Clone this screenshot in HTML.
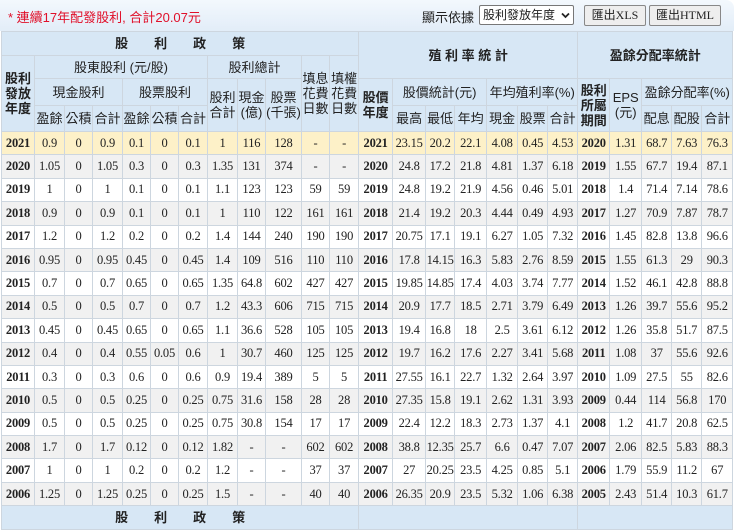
<!DOCTYPE html>
<html><head><meta charset="utf-8"><style>
body{margin:0;width:740px;height:517px;overflow:hidden;background:#fff;font-family:"Liberation Serif","Noto Sans CJK TC",serif;color:#222;}
.bar{position:absolute;left:0;top:0;width:734px;height:31px;background:linear-gradient(#f3f8fd,#e2edf8);border-radius:0 8px 0 0;}
.t{position:absolute;left:8px;top:7px;color:#e0102a;font-size:13px;font-family:"Liberation Sans","Noto Sans CJK TC",sans-serif;}
.lab{position:absolute;left:422px;top:7px;font-size:13px;font-family:"Liberation Sans","Noto Sans CJK TC",sans-serif;}
.sel{position:absolute;left:479px;top:5px;width:90px;height:18px;border:1px solid #777;border-radius:2px;background:#fff;font-size:12px;line-height:18px;padding-left:3px;font-family:"Liberation Sans","Noto Sans CJK TC",sans-serif;}
.sel svg{position:absolute;right:3px;top:6px;}
.btn{position:absolute;top:5px;height:19px;border:1px solid #888;background:#eee;font-size:12px;line-height:19px;text-align:center;border-radius:2px;}
table{position:absolute;left:1px;top:31px;border-collapse:collapse;table-layout:fixed;width:731px;font-size:13px;}
td,th{border:1px solid #cdd6df;padding:0;text-align:center;white-space:nowrap;overflow:visible;}
td{font-size:12.5px;letter-spacing:-0.2px;}
th{background:#d7e7f5;font-weight:normal;font-family:"Liberation Sans","Noto Sans CJK TC",sans-serif;line-height:15px;}
th.b{font-weight:bold;}
tr.d td{height:22.4px;}
tr.d td:first-child,tr.d td:nth-child(13),tr.d td:nth-child(20){font-weight:bold;}
tr.y td{background:#fdf1c8;}
tr.g td{background:#f1f1f1;}
</style></head><body>
<div class="bar"></div>
<div class="t">* 連續17年配發股利, 合計20.07元</div>
<div class="lab">顯示依據：</div>
<div class="sel">股利發放年度<svg width="9" height="7" viewBox="0 0 9 7"><path d="M1 1.5L4.5 5 8 1.5" fill="none" stroke="#222" stroke-width="1.8"/></svg></div>
<div class="btn" style="left:584px;width:60px">匯出XLS</div>
<div class="btn" style="left:649px;width:70px">匯出HTML</div>
<table>
<colgroup><col style="width:33px"><col style="width:30px"><col style="width:28px"><col style="width:30px"><col style="width:28px"><col style="width:28px"><col style="width:29px"><col style="width:30px"><col style="width:28px"><col style="width:36px"><col style="width:28px"><col style="width:29px"><col style="width:34px"><col style="width:33px"><col style="width:29px"><col style="width:32px"><col style="width:31px"><col style="width:30px"><col style="width:30px"><col style="width:32px"><col style="width:32px"><col style="width:30px"><col style="width:30px"><col style="width:31px"></colgroup>
<tr style="height:24px"><th colspan="12" class="b">股　　利　　政　　策</th><th colspan="7" rowspan="2" class="b">殖 利 率 統 計</th><th colspan="5" rowspan="2" class="b">盈餘分配率統計</th></tr>
<tr style="height:23px"><th rowspan="3" class="b">股利<br>發放<br>年度</th><th colspan="6">股東股利 (元/股)</th><th colspan="3">股利總計</th><th rowspan="3">填息<br>花費<br>日數</th><th rowspan="3">填權<br>花費<br>日數</th></tr>
<tr style="height:27px"><th colspan="3">現金股利</th><th colspan="3">股票股利</th><th rowspan="2">股利<br>合計</th><th rowspan="2">現金<br>(億)</th><th rowspan="2">股票<br>(千張)</th><th rowspan="2" class="b">股價<br>年度</th><th colspan="3">股價統計(元)</th><th colspan="3">年均殖利率(%)</th><th rowspan="2" class="b">股利<br>所屬<br>期間</th><th rowspan="2">EPS<br>(元)</th><th colspan="3">盈餘分配率(%)</th></tr>
<tr style="height:26px"><th>盈餘</th><th>公積</th><th>合計</th><th>盈餘</th><th>公積</th><th>合計</th><th>最高</th><th>最低</th><th>年均</th><th>現金</th><th>股票</th><th>合計</th><th>配息</th><th>配股</th><th>合計</th></tr>
<tr class="d y"><td>2021</td><td>0.9</td><td>0</td><td>0.9</td><td>0.1</td><td>0</td><td>0.1</td><td>1</td><td>116</td><td>128</td><td>-</td><td>-</td><td>2021</td><td>23.15</td><td>20.2</td><td>22.1</td><td>4.08</td><td>0.45</td><td>4.53</td><td>2020</td><td>1.31</td><td>68.7</td><td>7.63</td><td>76.3</td></tr>
<tr class="d g"><td>2020</td><td>1.05</td><td>0</td><td>1.05</td><td>0.3</td><td>0</td><td>0.3</td><td>1.35</td><td>131</td><td>374</td><td>-</td><td>-</td><td>2020</td><td>24.8</td><td>17.2</td><td>21.8</td><td>4.81</td><td>1.37</td><td>6.18</td><td>2019</td><td>1.55</td><td>67.7</td><td>19.4</td><td>87.1</td></tr>
<tr class="d"><td>2019</td><td>1</td><td>0</td><td>1</td><td>0.1</td><td>0</td><td>0.1</td><td>1.1</td><td>123</td><td>123</td><td>59</td><td>59</td><td>2019</td><td>24.8</td><td>19.2</td><td>21.9</td><td>4.56</td><td>0.46</td><td>5.01</td><td>2018</td><td>1.4</td><td>71.4</td><td>7.14</td><td>78.6</td></tr>
<tr class="d g"><td>2018</td><td>0.9</td><td>0</td><td>0.9</td><td>0.1</td><td>0</td><td>0.1</td><td>1</td><td>110</td><td>122</td><td>161</td><td>161</td><td>2018</td><td>21.4</td><td>19.2</td><td>20.3</td><td>4.44</td><td>0.49</td><td>4.93</td><td>2017</td><td>1.27</td><td>70.9</td><td>7.87</td><td>78.7</td></tr>
<tr class="d"><td>2017</td><td>1.2</td><td>0</td><td>1.2</td><td>0.2</td><td>0</td><td>0.2</td><td>1.4</td><td>144</td><td>240</td><td>190</td><td>190</td><td>2017</td><td>20.75</td><td>17.1</td><td>19.1</td><td>6.27</td><td>1.05</td><td>7.32</td><td>2016</td><td>1.45</td><td>82.8</td><td>13.8</td><td>96.6</td></tr>
<tr class="d g"><td>2016</td><td>0.95</td><td>0</td><td>0.95</td><td>0.45</td><td>0</td><td>0.45</td><td>1.4</td><td>109</td><td>516</td><td>110</td><td>110</td><td>2016</td><td>17.8</td><td>14.15</td><td>16.3</td><td>5.83</td><td>2.76</td><td>8.59</td><td>2015</td><td>1.55</td><td>61.3</td><td>29</td><td>90.3</td></tr>
<tr class="d"><td>2015</td><td>0.7</td><td>0</td><td>0.7</td><td>0.65</td><td>0</td><td>0.65</td><td>1.35</td><td>64.8</td><td>602</td><td>427</td><td>427</td><td>2015</td><td>19.85</td><td>14.85</td><td>17.4</td><td>4.03</td><td>3.74</td><td>7.77</td><td>2014</td><td>1.52</td><td>46.1</td><td>42.8</td><td>88.8</td></tr>
<tr class="d g"><td>2014</td><td>0.5</td><td>0</td><td>0.5</td><td>0.7</td><td>0</td><td>0.7</td><td>1.2</td><td>43.3</td><td>606</td><td>715</td><td>715</td><td>2014</td><td>20.9</td><td>17.7</td><td>18.5</td><td>2.71</td><td>3.79</td><td>6.49</td><td>2013</td><td>1.26</td><td>39.7</td><td>55.6</td><td>95.2</td></tr>
<tr class="d"><td>2013</td><td>0.45</td><td>0</td><td>0.45</td><td>0.65</td><td>0</td><td>0.65</td><td>1.1</td><td>36.6</td><td>528</td><td>105</td><td>105</td><td>2013</td><td>19.4</td><td>16.8</td><td>18</td><td>2.5</td><td>3.61</td><td>6.12</td><td>2012</td><td>1.26</td><td>35.8</td><td>51.7</td><td>87.5</td></tr>
<tr class="d g"><td>2012</td><td>0.4</td><td>0</td><td>0.4</td><td>0.55</td><td>0.05</td><td>0.6</td><td>1</td><td>30.7</td><td>460</td><td>125</td><td>125</td><td>2012</td><td>19.7</td><td>16.2</td><td>17.6</td><td>2.27</td><td>3.41</td><td>5.68</td><td>2011</td><td>1.08</td><td>37</td><td>55.6</td><td>92.6</td></tr>
<tr class="d"><td>2011</td><td>0.3</td><td>0</td><td>0.3</td><td>0.6</td><td>0</td><td>0.6</td><td>0.9</td><td>19.4</td><td>389</td><td>5</td><td>5</td><td>2011</td><td>27.55</td><td>16.1</td><td>22.7</td><td>1.32</td><td>2.64</td><td>3.97</td><td>2010</td><td>1.09</td><td>27.5</td><td>55</td><td>82.6</td></tr>
<tr class="d g"><td>2010</td><td>0.5</td><td>0</td><td>0.5</td><td>0.25</td><td>0</td><td>0.25</td><td>0.75</td><td>31.6</td><td>158</td><td>28</td><td>28</td><td>2010</td><td>27.35</td><td>15.8</td><td>19.1</td><td>2.62</td><td>1.31</td><td>3.93</td><td>2009</td><td>0.44</td><td>114</td><td>56.8</td><td>170</td></tr>
<tr class="d"><td>2009</td><td>0.5</td><td>0</td><td>0.5</td><td>0.25</td><td>0</td><td>0.25</td><td>0.75</td><td>30.8</td><td>154</td><td>17</td><td>17</td><td>2009</td><td>22.4</td><td>12.2</td><td>18.3</td><td>2.73</td><td>1.37</td><td>4.1</td><td>2008</td><td>1.2</td><td>41.7</td><td>20.8</td><td>62.5</td></tr>
<tr class="d g"><td>2008</td><td>1.7</td><td>0</td><td>1.7</td><td>0.12</td><td>0</td><td>0.12</td><td>1.82</td><td>-</td><td>-</td><td>602</td><td>602</td><td>2008</td><td>38.8</td><td>12.35</td><td>25.7</td><td>6.6</td><td>0.47</td><td>7.07</td><td>2007</td><td>2.06</td><td>82.5</td><td>5.83</td><td>88.3</td></tr>
<tr class="d"><td>2007</td><td>1</td><td>0</td><td>1</td><td>0.2</td><td>0</td><td>0.2</td><td>1.2</td><td>-</td><td>-</td><td>37</td><td>37</td><td>2007</td><td>27</td><td>20.25</td><td>23.5</td><td>4.25</td><td>0.85</td><td>5.1</td><td>2006</td><td>1.79</td><td>55.9</td><td>11.2</td><td>67</td></tr>
<tr class="d g"><td>2006</td><td>1.25</td><td>0</td><td>1.25</td><td>0.25</td><td>0</td><td>0.25</td><td>1.5</td><td>-</td><td>-</td><td>40</td><td>40</td><td>2006</td><td>26.35</td><td>20.9</td><td>23.5</td><td>5.32</td><td>1.06</td><td>6.38</td><td>2005</td><td>2.43</td><td>51.4</td><td>10.3</td><td>61.7</td></tr>
<tr style="height:24px"><th colspan="12" class="b">股　　利　　政　　策</th><th colspan="7"></th><th colspan="5"></th></tr>
</table>
</body></html>
